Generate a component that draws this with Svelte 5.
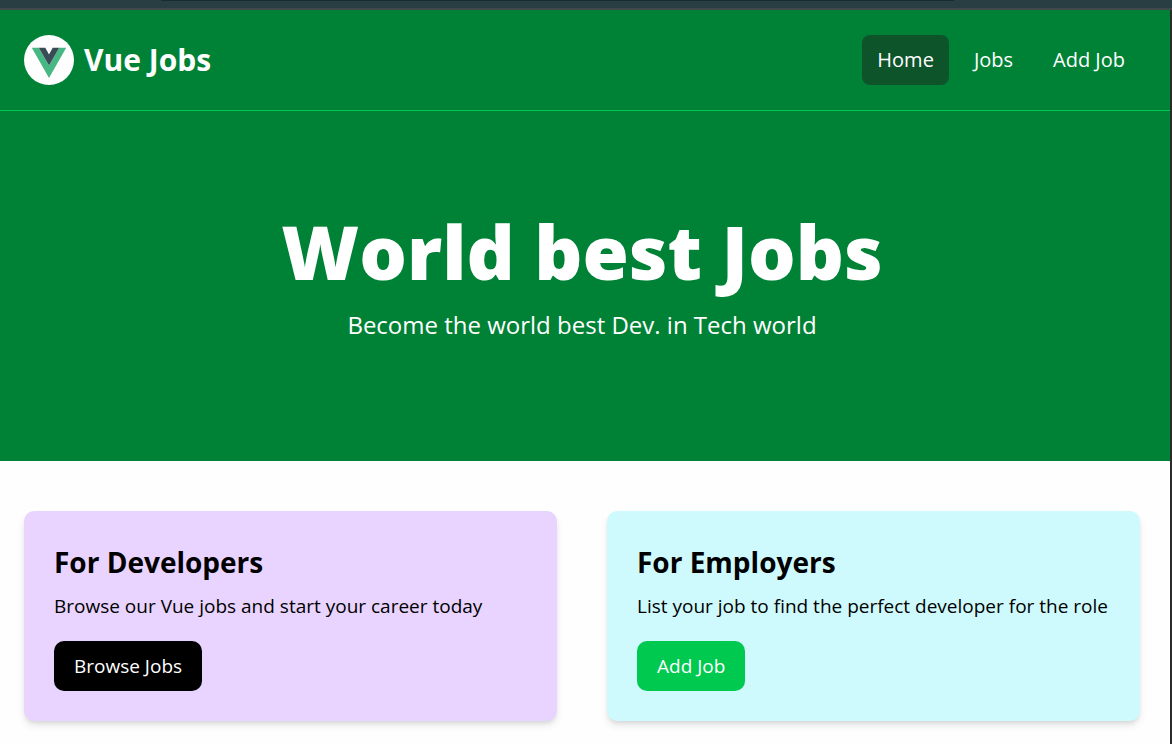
<script>
  const links = [
    { label: 'Home', href: '#home', active: true },
    { label: 'Jobs', href: '#jobs', active: false },
    { label: 'Add Job', href: '#add-job', active: false }
  ];

  const cards = [
    {
      title: 'For Developers',
      text: 'Browse our Vue jobs and start your career today',
      action: 'Browse Jobs',
      href: '#jobs',
      tone: 'purple'
    },
    {
      title: 'For Employers',
      text: 'List your job to find the perfect developer for the role',
      action: 'Add Job',
      href: '#add-job',
      tone: 'cyan'
    }
  ];
</script>

<div class="window">
  <div class="chrome"><div class="chrome-line"></div></div>
  <div class="page">
    <header class="navbar">
      <a class="brand" href="#home">
        <svg class="logo" viewBox="0 0 50 50" aria-hidden="true">
          <circle cx="25" cy="25" r="25" fill="#fefefe" />
          <path d="M7.8 12.800h7L25 30.500l10.200-17.700h7L25 43z" fill="#47b784" />
          <path d="M14.800 12.800h6.500L25 19.500l3.700-6.700h6.500L25 30.500z" fill="#394b55" />
        </svg>
        <span class="brand-name">Vue Jobs</span>
      </a>
      <nav class="links">
        {#each links as link}
          <a class="link" class:active={link.active} href={link.href}>{link.label}</a>
        {/each}
      </nav>
    </header>

    <section class="hero">
      <h1>World best Jobs</h1>
      <p>Become the world best Dev. in Tech world</p>
    </section>

    <main class="cards">
      {#each cards as card}
        <article class="card {card.tone}">
          <h2>{card.title}</h2>
          <p>{card.text}</p>
          <a class="button" href={card.href}>{card.action}</a>
        </article>
      {/each}
    </main>
  </div>
</div>

<style>
  :global(body) {
    margin: 0;
    background: #fefefe;
  }

  .window {
    display: flex;
    flex-direction: column;
    min-height: 100vh;
    color: #000;
    font-family: 'Segoe UI', 'Open Sans', sans-serif;
    font-size: 19px;
    line-height: 30px;
  }

  .chrome {
    box-sizing: border-box;
    height: 10px;
    padding: 0 218px 0 161px;
    background: #283e42;
    border-bottom: 2px solid #40484b;
  }

  .chrome-line {
    height: 1px;
    background: #182b2d;
  }

  .page {
    flex: 1;
    border-right: 2px solid #2b2b2b;
  }

  .navbar {
    display: flex;
    align-items: center;
    justify-content: space-between;
    padding: 25px 30px 25px 24px;
    background: #008236;
    border-bottom: 1px solid #00c950;
  }

  .brand {
    display: flex;
    align-items: center;
    gap: 10px;
    color: #fff;
    text-decoration: none;
  }

  .logo {
    width: 50px;
    height: 50px;
  }

  .brand-name {
    font-size: 30px;
    font-weight: 700;
    line-height: 40px;
  }

  .links {
    display: flex;
    gap: 10px;
    font-size: 20px;
  }

  .link {
    padding: 10px 15px;
    border-radius: 8px;
    color: #fff;
    text-decoration: none;
  }

  .link.active {
    background: #0d542b;
  }

  .hero {
    padding: 100px 30px 118px 24px;
    background: #008236;
    color: #fff;
    text-align: center;
  }

  .hero h1 {
    margin: 0;
    font-size: 75px;
    font-weight: 800;
    line-height: 80px;
  }

  .hero p {
    margin: 16px 0 0;
    font-size: 24px;
    line-height: 36px;
  }

  .cards {
    display: grid;
    grid-template-columns: repeat(auto-fit, minmax(320px, 1fr));
    gap: 50px;
    padding: 50px 30px 20px 24px;
  }

  .card {
    padding: 30px;
    border-radius: 10px;
    box-shadow: 0 5px 8px -1px rgb(0 0 0 / 10%), 0 3px 5px -2px rgb(0 0 0 / 10%);
  }

  .card.purple {
    background: #e9d4ff;
  }

  .card.cyan {
    background: #cefafe;
  }

  .card h2 {
    margin: 0;
    font-size: 28px;
    font-weight: 700;
    line-height: 42px;
  }

  .card p {
    margin: 8px 0 20px;
  }

  .button {
    display: inline-block;
    padding: 10px 20px;
    border-radius: 10px;
    background: #000;
    color: #fff;
    text-decoration: none;
    vertical-align: top;
  }

  .cyan .button {
    background: #00c950;
  }
</style>
